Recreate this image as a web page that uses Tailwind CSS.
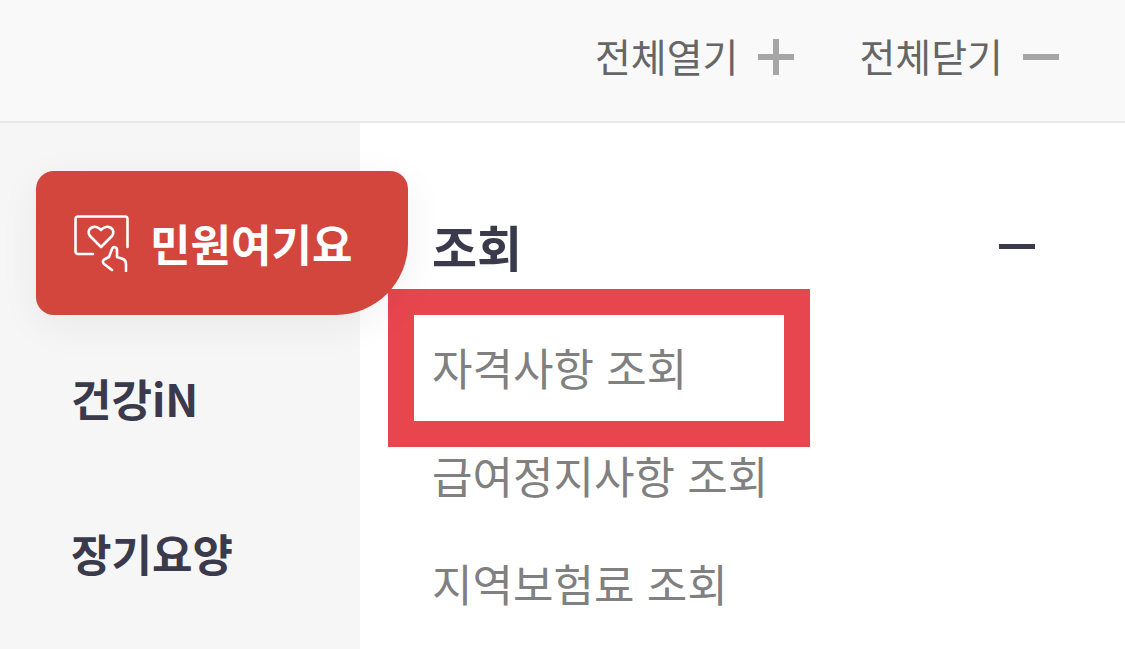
<!DOCTYPE html>
<html lang="ko">
<head>
    <meta charset="UTF-8">
    <title>전체메뉴</title>
    <script src="https://cdn.jsdelivr.net/npm/@tailwindcss/browser@4"></script>
</head>
<body class="bg-white font-['Noto_Sans_CJK_KR',sans-serif] overflow-hidden">
    <div class="relative w-[1125px] h-[649px] overflow-hidden">
        <!-- Top bar -->
        <header class="flex items-start justify-end h-[123px] pt-[29px] pr-[66px] bg-[#f9f9f9] border-b-2 border-[#e8e8e8]">
            <button class="flex items-center h-[56px] text-[39px] text-[#666666]">
                <span class="relative top-[-2px]">전체열기</span>
                <svg class="ml-[20px]" width="36" height="36" viewBox="0 0 36 36"><path d="M18 0v36M0 18h36" stroke="#a6a6a6" stroke-width="6"/></svg>
            </button>
            <button class="flex items-center h-[56px] ml-[65px] text-[39px] text-[#666666]">
                <span class="relative top-[-2px]">전체닫기</span>
                <svg class="ml-[20px]" width="36" height="36" viewBox="0 0 36 36"><path d="M0 18h36" stroke="#a6a6a6" stroke-width="6"/></svg>
            </button>
        </header>

        <div class="flex h-[526px]">
            <!-- Side menu -->
            <nav class="w-[360px] shrink-0 bg-[#f6f6f7] pt-[48px] pl-[36px]">
                <a class="relative z-10 flex items-center w-[372px] h-[144px] pl-[38px] bg-[#d2463e] rounded-t-[18px] rounded-bl-[18px] rounded-br-[72px] shadow-[0_10px_40px_rgba(0,0,0,0.06)] text-white text-[44px] font-bold">
                    <svg class="mr-[18px]" width="58" height="58" viewBox="0 0 58 58" fill="none" stroke="#fff" stroke-width="2.6" stroke-linecap="round" stroke-linejoin="round">
                        <path d="M19 40H4a2.500 2.500 0 0 1-2.500-2.500V5A2.500 2.500 0 0 1 4 2.500h47A2.500 2.500 0 0 1 53.500 5v28"/>
                        <path d="M27 33L16 22c-5-7 5-13 11-6c6-7 16-1 11 6z"/>
                        <path d="M38 56l-8-6c-2-2-1-4 1-5l4-2 3-8c1-3 5-2 5 1v7l6 2c2 1 3 3 3 5v7"/>
                    </svg>
                    민원여기요
                </a>
                <a class="flex items-center h-[86px] mt-[40px] pl-[35px] text-[#3a3a4c] text-[44px] font-bold">건강iN</a>
                <a class="flex items-center h-[86px] mt-[69px] pl-[35px] text-[#3a3a4c] text-[44px] font-bold">장기요양</a>
            </nav>

            <!-- Sub menu -->
            <section class="flex-1 pt-[88px] pl-[72px] pr-[90px]">
                <div class="flex items-center justify-between h-[70px] text-[#3a3a4c] text-[49px] font-bold">
                    조회
                    <span class="block w-[36px] h-[5px] bg-[#3a3a4c]"></span>
                </div>
                <ul class="mt-[32px] text-[44px] text-[#808080]">
                    <li class="flex items-center h-[108px]">자격사항 조회</li>
                    <li class="flex items-center h-[108px]">급여정지사항 조회</li>
                    <li class="flex items-center h-[108px]">지역보험료 조회</li>
                </ul>
            </section>
        </div>

        <!-- Highlight annotation -->
        <div class="absolute left-[388px] top-[289px] w-[422px] h-[158px] border-[26px] border-[#e8464e]"></div>
    </div>
</body>
</html>
